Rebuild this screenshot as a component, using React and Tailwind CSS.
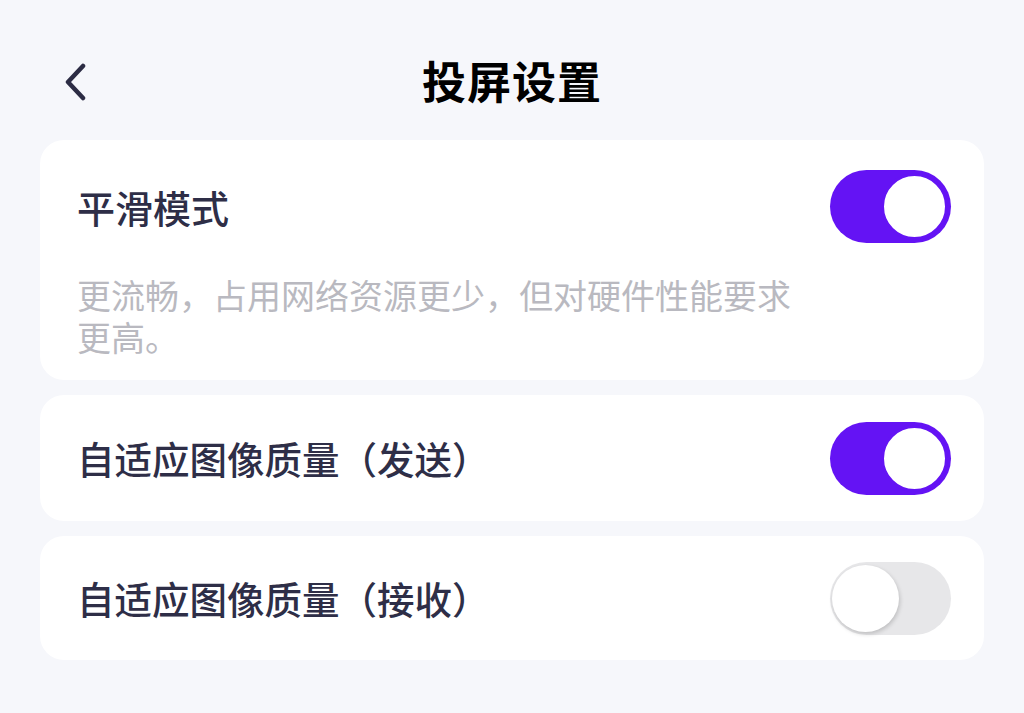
import React, { useState } from 'react';

const font = { fontFamily: '"Noto Sans CJK SC", "Noto Sans", sans-serif' };

function Toggle({ on, onChange }) {
  return (
    <button
      onClick={onChange}
      className={`relative w-[121px] h-[73px] rounded-full shrink-0 ${on ? 'bg-[#6413f4]' : 'bg-[#e7e7e9]'}`}
    >
      {on ? (
        <span className="absolute right-[3px] top-[3px] w-[67px] h-[67px] rounded-full bg-white border-[3px] border-[#6413f4]" />
      ) : (
        <span className="absolute left-[2px] top-[3px] w-[67px] h-[67px] rounded-full bg-white shadow-[1px_2px_4px_rgba(0,0,0,0.18)]" />
      )}
    </button>
  );
}

export default function App() {
  const [smooth, setSmooth] = useState(true);
  const [send, setSend] = useState(true);
  const [recv, setRecv] = useState(false);

  return (
    <div className="w-[1024px] h-[713px] bg-[#f6f7fb] overflow-hidden" style={font}>
      <div className="relative h-[140px] flex items-start justify-center pt-[58px]">
        <button className="absolute left-[60px] top-[62px] w-[30px] h-[40px] flex items-center justify-center">
          <svg width="26" height="38" viewBox="0 0 26 38" fill="none">
            <path d="M21 3 L6 19 L21 35" stroke="#2c2c44" strokeWidth="4.5" strokeLinecap="round" strokeLinejoin="round" />
          </svg>
        </button>
        <h1 className="text-[44px] font-bold text-black leading-none tracking-[1px]">投屏设置</h1>
      </div>

      <div className="px-[40px] flex flex-col gap-[15px]">
        <div className="bg-white rounded-[24px] pl-[37px] pr-[33px] pt-[30px] pb-[22px]">
          <div className="flex items-center justify-between">
            <span className="text-[38px] font-medium text-[#2e2e47] leading-none">平滑模式</span>
            <Toggle on={smooth} onChange={() => setSmooth(!smooth)} />
          </div>
          <p className="mt-[31px] w-[740px] text-[34px] leading-[42px] text-[#b9b9c0]">
            更流畅，占用网络资源更少，但对硬件性能要求更高。
          </p>
        </div>

        <div className="bg-white rounded-[24px] pl-[37px] pr-[33px] h-[126px] flex items-center justify-between">
          <span className="text-[37.5px] font-medium text-[#2e2e47] leading-none">自适应图像质量（发送）</span>
          <Toggle on={send} onChange={() => setSend(!send)} />
        </div>

        <div className="bg-white rounded-[24px] pl-[37px] pr-[33px] h-[124px] flex items-center justify-between">
          <span className="text-[37.5px] font-medium text-[#2e2e47] leading-none">自适应图像质量（接收）</span>
          <Toggle on={recv} onChange={() => setRecv(!recv)} />
        </div>
      </div>
    </div>
  );
}
